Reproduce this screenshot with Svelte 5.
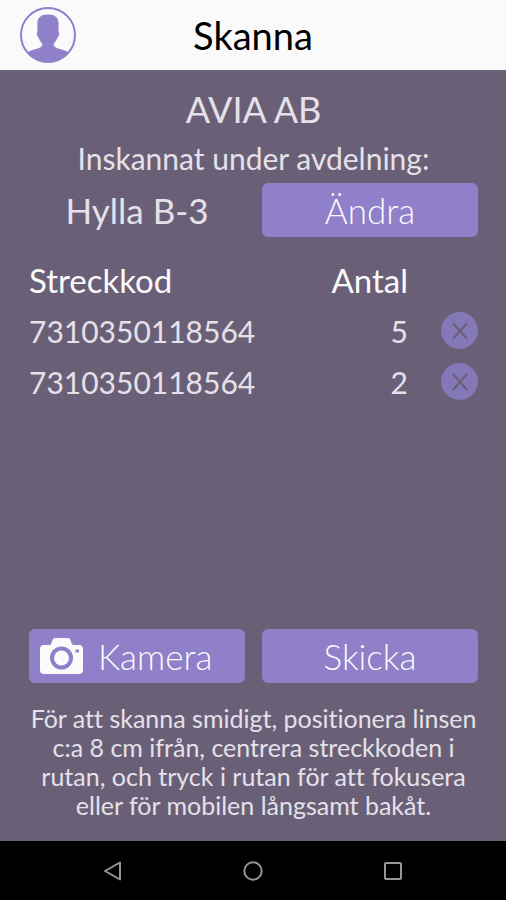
<script>
  const company = 'AVIA AB';
  const department = 'Hylla B-3';

  let nextId = 3;

  let scans = $state([
    { id: 1, barcode: '7310350118564', amount: 5 },
    { id: 2, barcode: '7310350118564', amount: 2 }
  ]);

  const removeScan = id => {
    scans = scans.filter(s => s.id !== id);
  };

  const addScan = () => {
    scans.push({ id: nextId++, barcode: '7310350118564', amount: 1 });
  };

  const sendScans = () => {
    scans = [];
  };
</script>

<div class="screen">
  <header>
    <button class="profile" aria-label="Profil">
      <svg viewBox="0 0 56 56" aria-hidden="true">
        <clipPath id="profile-clip"><circle cx="28" cy="28" r="27" /></clipPath>
        <path
          clip-path="url(#profile-clip)"
          d="M28 7.500C20.500 7.500 17 11 17.300 18L17.600 24C16.300 25.500 17 30 18.800 31C19.600 34 20.800 35 22.300 36.500C22.500 39 21.500 40.200 18.500 41.300C14 43 9.500 43.500 6 46.500V58H50V46.500C46.500 43.500 42 43 37.500 41.300C34.500 40.200 33.500 39 33.700 36.500C35.200 35 36.400 34 37.200 31C39 30 39.700 25.500 38.400 24L38.700 18C39 11 35.500 7.500 28 7.500Z"
        />
        <circle class="ring" cx="28" cy="28" r="27" />
      </svg>
    </button>
    <h1>Skanna</h1>
  </header>

  <main>
    <h2>{company}</h2>
    <p class="label">Inskannat under avdelning:</p>
    <div class="pair">
      <span class="department">{department}</span>
      <button class="action">Ändra</button>
    </div>

    <table>
      <thead>
        <tr>
          <th>Streckkod</th>
          <th class="amount">Antal</th>
          <td class="tools"></td>
        </tr>
      </thead>
      <tbody>
        {#each scans as scan (scan.id)}
        <tr>
          <td>{scan.barcode}</td>
          <td class="amount">{scan.amount}</td>
          <td class="tools">
            <button class="remove" aria-label="Ta bort" onclick={() => removeScan(scan.id)}>
              <svg viewBox="0 0 16 18" aria-hidden="true"><path d="M1 1L15 17M15 1L1 17" /></svg>
            </button>
          </td>
        </tr>
        {/each}
      </tbody>
    </table>

    <div class="pair bottom">
      <button class="action camera" onclick={addScan}>
        <svg viewBox="0 0 43 36" aria-hidden="true">
          <path
            fill-rule="evenodd"
            d="M4 7H9.500Q11 7 11.500 5L12.500 2Q13 0 15 0H28Q30 0 30.500 2L31.500 5Q32 7 33.500 7H39Q43 7 43 11V32Q43 36 39 36H4Q0 36 0 32V11Q0 7 4 7ZM21.500 8.500A11.500 11.500 0 1 0 21.500 31.500A11.500 11.500 0 1 0 21.500 8.500ZM35.500 11.500V14.500H39V11.500Z"
          />
          <circle cx="21.500" cy="20" r="7.500" />
        </svg>
        <span>Kamera</span>
      </button>
      <button class="action" onclick={sendScans}>Skicka</button>
    </div>
    <p class="help">
      För att skanna smidigt, positionera linsen c:a 8 cm ifrån, centrera streckkoden i
      rutan, och tryck i rutan för att fokusera eller för mobilen långsamt bakåt.
    </p>
  </main>

  <nav>
    <button aria-label="Tillbaka">
      <svg viewBox="0 0 20 20" aria-hidden="true"><path d="M17 1.500V18.500L2 10Z" /></svg>
    </button>
    <button aria-label="Hem">
      <svg viewBox="0 0 20 20" aria-hidden="true"><circle cx="10" cy="10" r="8.700" /></svg>
    </button>
    <button aria-label="Översikt">
      <svg viewBox="0 0 20 20" aria-hidden="true"><rect x="2" y="2" width="16" height="16" rx="1" /></svg>
    </button>
  </nav>
</div>

<style>
  :global(body) {
    margin: 0;
    background: #696078;
  }

  .screen {
    display: flex;
    flex-direction: column;
    min-height: 100vh;
    font-family: Lato, "Open Sans", sans-serif;
    font-variant-ligatures: none;
    color: #e6e0e8;
    background: #696078;
  }

  button {
    padding: 0;
    border: 0;
    background: none;
    font-family: inherit;
    color: inherit;
    cursor: pointer;
  }

  svg {
    display: block;
  }

  header {
    display: grid;
    grid-template-columns: 56px 1fr 56px;
    align-items: center;
    height: 70px;
    padding: 0 20px;
    background: #fafafa;
  }

  .profile svg {
    width: 56px;
    height: 56px;
    fill: #8f80c9;
  }

  .profile .ring {
    fill: none;
    stroke: #8f80c9;
    stroke-width: 2;
  }

  h1 {
    margin: 0;
    font-size: 38px;
    font-weight: 400;
    line-height: 48px;
    text-align: center;
    color: #000;
  }

  main {
    display: flex;
    flex: 1;
    flex-direction: column;
    padding: 15px 28px 21px 29px;
  }

  h2 {
    margin: 0;
    font-size: 36px;
    font-weight: 400;
    line-height: 48px;
    text-align: center;
  }

  .label {
    margin: 9px 0 8px;
    font-size: 30px;
    line-height: 33px;
    text-align: center;
  }

  .pair {
    display: grid;
    grid-template-columns: 1fr 1fr;
    gap: 17px;
    align-items: center;
  }

  .department {
    font-size: 35px;
    line-height: 48px;
    text-align: center;
  }

  .action {
    height: 54px;
    border-radius: 6px;
    background: #8f80c9;
    font-size: 35px;
    font-weight: 300;
    color: #fafafa;
  }

  .camera {
    display: flex;
    align-items: center;
    gap: 15px;
    padding: 0 11px;
  }

  .camera svg {
    width: 43px;
    height: 36px;
    fill: #fafafa;
  }

  table {
    width: 100%;
    margin-top: 17px;
    border-collapse: collapse;
    font-size: 30px;
    line-height: 50px;
  }

  th,
  td {
    height: 51px;
    padding: 0;
    font-weight: 400;
    text-align: left;
  }

  th {
    font-size: 33px;
    color: #fafafa;
  }

  .amount {
    text-align: right;
  }

  .tools {
    width: 70px;
  }

  .remove {
    display: flex;
    align-items: center;
    justify-content: center;
    width: 37px;
    height: 37px;
    margin-left: auto;
    border-radius: 50%;
    background: #8578b8;
  }

  .remove svg {
    width: 16px;
    height: 18px;
    fill: none;
    stroke: #696078;
    stroke-width: 2;
  }

  .bottom {
    margin-top: auto;
  }

  .help {
    margin: 21px 0 0;
    font-size: 25px;
    line-height: 29px;
    text-align: center;
  }

  nav {
    display: flex;
    align-items: center;
    justify-content: center;
    gap: 120px;
    height: 59px;
    background: #000;
  }

  nav svg {
    width: 20px;
    height: 20px;
    fill: none;
    stroke: #969696;
    stroke-width: 2;
    stroke-linejoin: round;
  }
</style>
